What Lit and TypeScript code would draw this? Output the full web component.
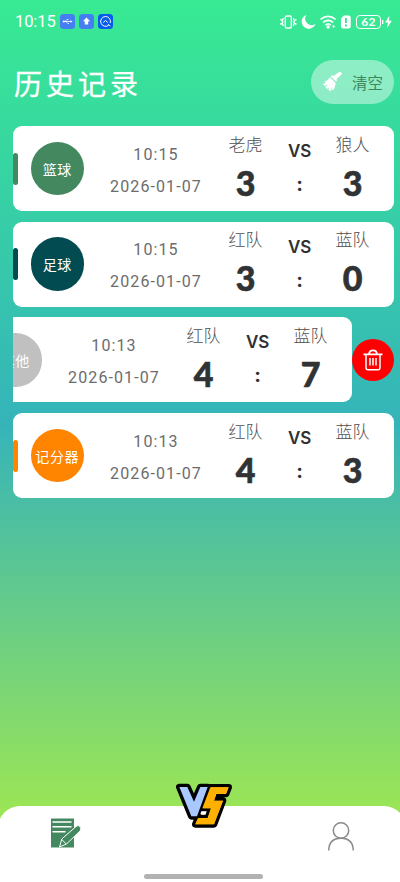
import { LitElement, html, css, svg } from "lit";
import { customElement, property } from "lit/decorators.js";
import { styleMap } from "lit/directives/style-map.js";

interface Match {
  sport: string;
  color: string;
  time: string;
  date: string;
  home: string;
  away: string;
  homeScore: number;
  awayScore: number;
  open?: boolean;
}

const MATCHES: Match[] = [
  { sport: "篮球", color: "#448860", time: "10:15", date: "2026-01-07", home: "老虎", away: "狼人", homeScore: 3, awayScore: 3 },
  { sport: "足球", color: "#024b50", time: "10:15", date: "2026-01-07", home: "红队", away: "蓝队", homeScore: 3, awayScore: 0 },
  { sport: "其他", color: "#c0c0c0", time: "10:13", date: "2026-01-07", home: "红队", away: "蓝队", homeScore: 4, awayScore: 7, open: true },
  { sport: "记分器", color: "#ff8400", time: "10:13", date: "2026-01-07", home: "红队", away: "蓝队", homeScore: 4, awayScore: 3 },
];

@customElement("status-bar")
export class StatusBar extends LitElement {
  static styles = css`
    :host { display: flex; align-items: center; height: 43px; padding: 0 8px 0 15px; color: #fff; box-sizing: border-box; }
    .clock { font: 400 16.5px/20px Roboto, sans-serif; letter-spacing: -0.1px; width: 45px; }
    .apps { display: flex; gap: 4px; }
    .spacer { flex: 1; }
    svg { display: block; }
    .sys { display: flex; align-items: center; }
    .battery { box-sizing: border-box; width: 25px; height: 14px; border: 1px solid #fff; border-radius: 4px; font: 700 12px/12px Lato, sans-serif; text-align: center; letter-spacing: 0.4px; }
  `;
  render() {
    return html`
      <span class="clock">10:15</span>
      <div class="apps">
        <svg width="15" height="15" viewBox="0 0 15 15"><rect width="15" height="15" rx="3.5" fill="#447ef2"/><path d="M3 7.5h8M5 7.5l2-2h1.5M6 7.5l1.8 2H9" stroke="#fff" stroke-width=".8" fill="none"/><circle cx="3.8" cy="7.5" r="1.1" fill="#fff"/><path d="M10.5 6.2l2 1.3-2 1.3z" fill="#fff"/></svg>
        <svg width="15" height="15" viewBox="0 0 15 15"><rect width="15" height="15" rx="3.5" fill="#447ef2"/><path d="M7.5 3.5l3.6 3.8H9.2v3.2H5.8V7.3H3.9z" fill="#fff"/></svg>
        <svg width="15" height="15" viewBox="0 0 15 15"><rect width="15" height="15" rx="3.5" fill="#075ceb"/><path d="M10.8 11.1A4.9 4.9 0 1 1 12.2 9M10.2 10.2l2.2 2M5.2 8.5l2.3-2 2.3 2" stroke="#fff" stroke-width="1" fill="none"/></svg>
      </div>
      <span class="spacer"></span>
      <div class="sys">
        <svg width="76" height="16" viewBox="0 0 76 16">
          <g fill="none" stroke="#fff" stroke-width="1.300"><rect x="5.3" y="2" width="6" height="12" rx="1.2"/><path d="M3 4v1.6l-1 1 1 1.4-1 1.4 1 1V12M1 5v1.5M1 9v2M13.6 4v1.6l1 1-1 1.4 1 1.4-1 1V12M15.8 5v1.5M15.8 9v2"/></g>
          <path d="M26.500 .9a7.100 7.100 0 1 0 9 8.900 6.400 6.400 0 0 1-9-8.900z" fill="#fff"/>
          <g fill="none" stroke="#fff" stroke-width="1.6"><path d="M40.5 5.4q7.600-6 15.200 0M43 8.400q5.100-4 10.200 0M45.400 11q2.700-2.100 5.400 0"/></g>
          <circle cx="48.1" cy="13" r="1.7" fill="#fff"/><path d="M52.700 10.800l2.600 1.600-2.600 1.600z" fill="#fff"/>
          <path d="M63.900 1.500h4.800a2 2 0 0 1 2 2v9a2 2 0 0 1-2 2H63a2 2 0 0 1-2-2V4.500z" fill="#fff"/><path d="M65.900 4v5M65.900 10.600v2" stroke="#38dc95" stroke-width="1.800"/>
        </svg>
        <div class="battery">62</div>
        <svg width="11" height="14" viewBox="0 0 11 14"><path d="M1.700 5v4" stroke="#fff" stroke-width="1.300"/><path d="M8.300 .8L4.200 7.600h2.700L6.200 13l4.600-7.200H8z" fill="#fff"/></svg>
      </div>
    `;
  }
}

@customElement("match-card")
export class MatchCard extends LitElement {
  @property({ attribute: false }) match!: Match;
  static styles = css`
    :host { display: block; height: 85px; overflow: hidden; }
    .row { display: flex; align-items: center; width: 381px; }
    .row.open { margin-left: -42px; width: 423px; }
    .card { display: flex; align-items: center; box-sizing: border-box; flex: none; width: 381px; height: 85px; background: #fff; border-radius: 9px; overflow: hidden; }
    .strip { width: 5.500px; height: 32px; border-radius: 2.500px; margin-right: 12.500px; }
    .disc { flex: none; width: 53.500px; height: 53.500px; border-radius: 50%; display: flex; align-items: center; justify-content: center; color: #fff; font-size: 14px; letter-spacing: .6px; white-space: nowrap; }
    .when { width: 144px; display: flex; flex-direction: column; align-items: center; gap: 12px; padding-top: 4px; color: #6c6c6c; font: 400 16px/20px Roboto, sans-serif; }
    .time { letter-spacing: 1.100px; }
    .date { letter-spacing: 1.100px; }
    .team { width: 35px; display: flex; flex-direction: column; align-items: center; white-space: nowrap; padding-bottom: 3px; }
    .name { font-size: 17px; line-height: 24px; color: #505050; font-weight: 300; }
    .score { font: 900 34px/40px Lato, sans-serif; color: #303233; margin-top: 7px; -webkit-text-stroke: .6px #303233; }
    .mid { width: 72px; display: flex; flex-direction: column; align-items: center; color: #303233; padding: 1px 0 0 1px; box-sizing: border-box; }
    .vs { font: 600 17px/22px Inter, sans-serif; letter-spacing: -.3px; }
    .colon { font: 700 20px/28px Inter, sans-serif; margin-top: 8px; }
    .del { flex: none; width: 42px; height: 42px; border-radius: 50%; background: #f00; display: flex; align-items: center; justify-content: center; }
    .del svg { display: block; }
  `;
  render() {
    const m = this.match;
    const bg = styleMap({ background: m.color });
    return html`
      <div class="row ${m.open ? "open" : ""}">
        <div class="card">
          <div class="strip" style=${bg}></div>
          <div class="disc" style=${bg}>${m.sport}</div>
          <div class="when"><span class="time">${m.time}</span><span class="date">${m.date}</span></div>
          <div class="team"><span class="name">${m.home}</span><span class="score">${m.homeScore}</span></div>
          <div class="mid"><span class="vs">VS</span><span class="colon">:</span></div>
          <div class="team"><span class="name">${m.away}</span><span class="score">${m.awayScore}</span></div>
        </div>
        ${m.open
          ? html`<div class="del"><svg width="22" height="24" viewBox="0 0 22 24" fill="none" stroke="#fff" stroke-width="1.500"><path stroke-width="1.800" d="M1.500 6.300h19M7 6q.5-3.700 4-3.700t4 3.700"/><path d="M4 6.500V19.500q0 2.300 2 2.300h10q2 0 2-2.300V6.500M8 10v7.500M11 10v7.500M14 10v7.500"/></svg></div>`
          : ""}
      </div>
    `;
  }
}

const vsLogo = svg`
  <g stroke="#000" stroke-width="20" stroke-linejoin="round" paint-order="stroke">
    <path fill="#ffb000" d="M136 37H191L183 57H154L147 77H174L147 148H91L99 129H128L138 100H112Z"/>
    <path fill="#a9c8ff" d="M43 36H67L87 80L106 36H128L96 124H79Z"/>
  </g>
  <path fill="#ffb000" d="M136 37H191L183 57H154L147 77H174L147 148H91L99 129H128L138 100H112Z"/>
  <path fill="#fff" d="M109 109H125L122 118H106Z"/>
`;

@customElement("app-root")
export class AppRoot extends LitElement {
  static styles = css`
    :host {
      display: flex; flex-direction: column; height: 882px; width: 400px; overflow: hidden; box-sizing: border-box;
      font-family: "Noto Sans CJK SC", sans-serif;
      background: linear-gradient(to bottom, #38ea93 0, #35b4b9 423px, #9de653 820px);
    }
    header { display: flex; align-items: center; justify-content: space-between; height: 78px; padding: 0 6px 0 14px; box-sizing: border-box; }
    h1 { margin: 1px 0 0; color: #fff; font-size: 28px; line-height: 40px; font-weight: 400; letter-spacing: 4px; -webkit-text-stroke: .3px #fff; }
    .clear { display: flex; align-items: center; width: 83px; height: 44px; box-sizing: border-box; padding-left: 11px; gap: 9px; border-radius: 22px; background: rgba(255, 255, 255, 0.43); color: #40875e; font-size: 15.500px; white-space: nowrap; }
    .list { display: flex; flex-direction: column; gap: 10.700px; padding: 5px 6.500px 0 12.500px; flex: 1; }
    nav { position: relative; display: flex; justify-content: space-between; box-sizing: border-box; height: 76px; margin: 0 -6px 0 -2px; padding: 10px 51px 0 51px; background: #fff; border-radius: 22px 22px 0 0; }
    .logo { position: absolute; left: 167px; top: -31px; }
    .handle { position: absolute; left: 146px; bottom: 3px; width: 119px; height: 5px; border-radius: 3px; background: #b2b2b2; }
    .person { margin-top: 3px; }
    svg { display: block; }
  `;
  render() {
    return html`
      <status-bar></status-bar>
      <header>
        <h1>历史记录</h1>
        <div class="clear">
          <svg width="21" height="22" viewBox="0 0 21 22" fill="#fff"><path d="M16.800 1.200q1.800-.8 2.700.6.700 1.100-.5 2.200l-4.500 4.200.8 1.100-1.300 1.300-5.300-5.100 1.300-1.400 1.500.9z"/><path d="M7.900 6.300l5.800 5.600c-.4 3-1.200 5.500-3 7.700l-1.200-2.600-.8 3.200-2.300-1.200.6-2.500-2 1.500-1.800-2 2.600-2.400-3.600 1.100L1 12.800l3.100-.7-1.700-1.400c2.400-.8 4-2 5.500-4.400z"/></svg>
          <span>清空</span>
        </div>
      </header>
      <div class="list">${MATCHES.map((m) => html`<match-card .match=${m}></match-card>`)}</div>
      <nav>
        <svg width="32" height="33" viewBox="0 0 32 33"><path fill="#448860" d="M2 2.500h23v29H2z"/><path d="M4 6h18M4 10.800h18M4 15.700h12" stroke="#fff" stroke-width="1.500" stroke-linecap="round"/><path d="M10.500 31l2.300-8L27 10.500q2.500-2 4 0t.2 4.300L17.500 28z" fill="#448860" stroke="#fff" stroke-width="1"/><path d="M12.800 23.500l4.500 4.500" stroke="#fff" stroke-width="1"/></svg>
        <svg class="person" width="28" height="32" viewBox="0 0 28 32" fill="none" stroke="#8a8a8a" stroke-width="1.500"><circle cx="14" cy="11.500" r="7.700"/><path d="M1.700 31.500q.3-12.300 12.300-12.300t12.300 12.300"/></svg>
        <svg class="logo" width="80" height="60" viewBox="0 0 240 180">${vsLogo}</svg>
        <div class="handle"></div>
      </nav>
    `;
  }
}
